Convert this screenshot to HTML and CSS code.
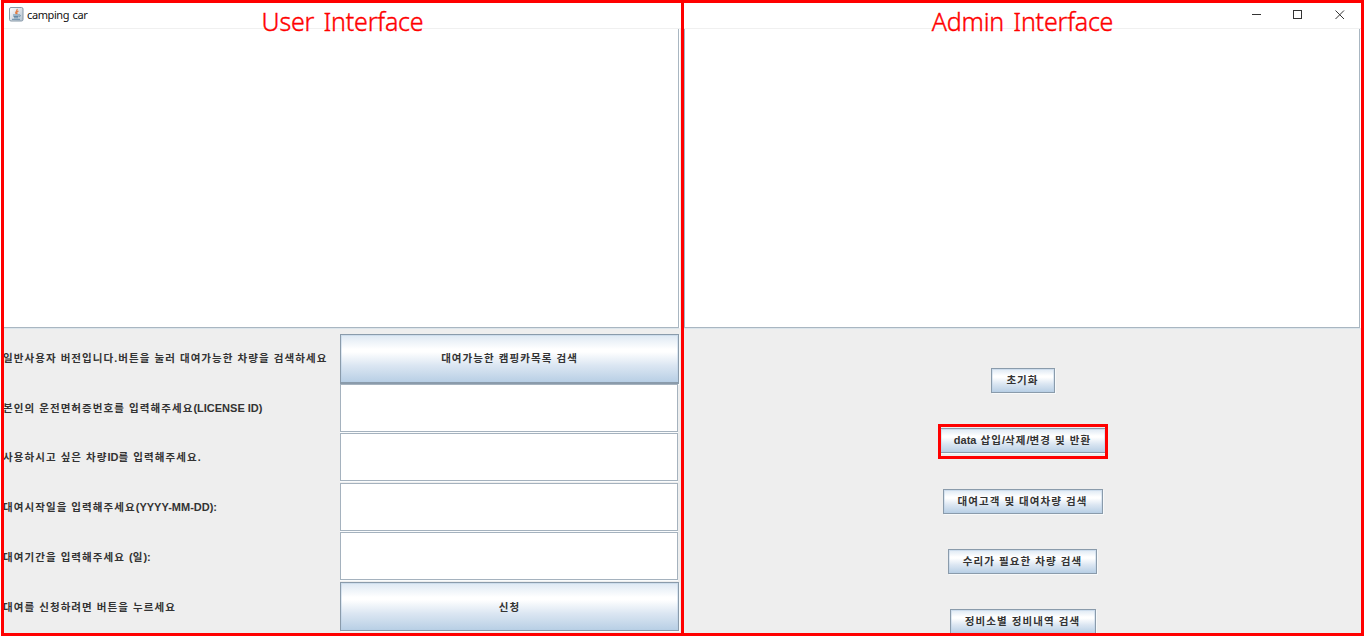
FILE: index.html
```
<!DOCTYPE html>
<html lang="ko">
<head>
<meta charset="utf-8">
<title>camping car</title>
<link rel="stylesheet" href="styles.css">
</head>
<body>
<div class="window">
  <header class="titlebar">
    <svg class="java" width="15" height="15" viewBox="0 0 15 15">
      <defs><linearGradient id="tile" x2="1" y2="1"><stop stop-color="#fff"/><stop offset="1" stop-color="#b3c2cf"/></linearGradient></defs>
      <rect x=".5" y=".5" width="13.5" height="13.5" rx="1.5" fill="url(#tile)" stroke="#8799a8"/>
      <path d="M8 2C9 4 5.500 4.500 7 7M9.500 4C7.500 5 7.500 5.500 8.200 7" fill="none" stroke="#e07a40" stroke-width="1.200"/>
      <path d="M4 8h6M4.500 9.500h5M5 10.800h4.200M10 8c2-.5 1.500 1.500 0 2M3 12.300h8" fill="none" stroke="#6389a6"/>
    </svg>
    <span class="title">camping car</span>
    <svg class="controls" width="94" height="11" viewBox="0 0 94 11" fill="none" stroke="#333">
      <path d="M0 5.500h9"/><rect x="41.500" y="1.500" width="8" height="8"/><path d="M83.500 1.500l8.500 8.500M92 1.500L83.500 10"/>
    </svg>
  </header>
  <main class="panels">
    <section class="panel user">
      <div class="output"></div>
      <div class="form">
        <label class="intro">일반사용자 버전입니다.버튼을 눌러 대여가능한 차량을 검색하세요</label>
        <button class="big first">대여가능한 캠핑카목록 검색</button>
        <label>본인의 운전면허증번호를 입력해주세요<span class="latin">(LICENSE ID)</span></label>
        <input>
        <label>사용하시고 싶은 차량<span class="latin">ID</span>를 입력해주세요.</label>
        <input>
        <label>대여시작일을 입력해주세요<span class="latin">(YYYY-MM-DD):</span></label>
        <input>
        <label>대여기간을 입력해주세요 <span class="latin">(</span>일<span class="latin">):</span></label>
        <input>
        <label>대여를 신청하려면 버튼을 누르세요</label>
        <button class="big">신청</button>
      </div>
    </section>
    <section class="panel admin">
      <div class="output"></div>
      <div class="actions">
        <button class="b1">초기화</button>
        <button class="b2"><span class="latin">data</span> 삽입<span class="latin">/</span>삭제<span class="latin">/</span>변경 및 반환</button>
        <button class="b3">대여고객 및 대여차량 검색</button>
        <button class="b4">수리가 필요한 차량 검색</button>
        <button class="b5">정비소별 정비내역 검색</button>
      </div>
    </section>
  </main>
  <div class="frame frame-user"><span class="caption">User Interface</span></div>
  <div class="frame frame-admin"><span class="caption">Admin Interface</span></div>
  <div class="highlight"></div>
</div>
</body>
</html>
```
FILE: styles.css
```
* { box-sizing: border-box; }
body { margin: 0; background: #fff; }
.window {
  position: relative;
  display: flex;
  flex-direction: column;
  width: 1364px;
  height: 637px;
  padding: 0 3px 1px;
  overflow: hidden;
  font-family: "Liberation Sans", "Noto Sans CJK KR", sans-serif;
}
.titlebar {
  display: flex;
  align-items: center;
  flex: none;
  height: 29px;
  padding: 0 15px 0 6px;
  border-bottom: 1px solid #f0f0f0;
  background: #fff;
}
.title {
  margin-left: 3px;
  font: 11px "Noto Sans", sans-serif;
  letter-spacing: -.4px;
  word-spacing: 1px;
  color: #111;
}
.controls { margin-left: auto; }
.panels {
  display: grid;
  grid-template-columns: 681px 1fr;
  flex: 1;
  min-height: 0;
  background: #eee;
}
.panel { display: flex; flex-direction: column; min-width: 0; min-height: 0; }
.output {
  flex: none;
  height: 299px;
  margin-right: 5px;
  background: #fff;
  border: solid #a9b6c1;
  border-width: 0 1px 1px 0;
  box-shadow: 0 1px #dce5eb, 1px 0 #fff;
}
.admin .output { margin-right: 1px; border-left-width: 1px; }
.form {
  display: grid;
  grid-template-columns: 337px 339px;
  grid-template-rows: 49px 49px 50px 49px 51px 49px;
  padding-top: 6px;
}
label {
  align-self: center;
  font-weight: bold;
  font-size: 10.500px;
  line-height: 16px;
  letter-spacing: 1.070px;
  white-space: nowrap;
  color: #333;
}
.intro { padding-bottom: 2px; }
.latin { font-size: 11px; letter-spacing: 0; }
input {
  width: 338px;
  height: 48px;
  margin: 1px 0 0;
  padding: 0;
  border: 1px solid #a5b2be;
  border-radius: 0;
  background: #fff;
  box-shadow: 0 1px #fafcfd;
}
button {
  padding: 0;
  border: 1px solid #8a9bab;
  box-shadow: inset 0 0 0 1px rgba(184, 207, 229, .45), 1px 1px #f7f9fa;
  background: linear-gradient(#dde8f3, #fff 30%, #fff 36%, #dbe6f2 65%, #b8cfe5);
  color: #333;
  font: bold 10.500px/14px "Liberation Sans", "Noto Sans CJK KR", sans-serif;
  letter-spacing: 1.070px;
  white-space: nowrap;
}
.big { width: 339px; height: 49px; }
.first { height: 50px; padding-bottom: 1px; border-bottom-width: 2px; }
.actions {
  display: flex;
  flex-direction: column;
  align-items: center;
  gap: 35.300px;
  height: 308px;
  padding-top: 40px;
  overflow: hidden;
}
.actions button { flex: none; height: 25px; padding-bottom: 1px; }
.b1 { width: 64px; }
.b2 { width: 166px; }
.b3 { width: 160px; }
.b4 { width: 149px; }
.b5 { width: 146px; }
.frame {
  position: absolute;
  top: 0;
  height: 636px;
  border: 3px solid #f00;
  text-align: center;
  color: #f00;
  font: 25px/36px "Noto Sans", sans-serif;
}
.frame-user { left: 1px; width: 683px; }
.frame-admin { left: 681px; width: 683px; }
.caption {
  display: inline-block;
  white-space: nowrap;
  font-weight: 300;
  letter-spacing: -.2px;
  word-spacing: 3px;
  -webkit-text-stroke: .4px #f00;
}
.highlight {
  position: absolute;
  left: 938px;
  top: 424px;
  width: 170px;
  height: 35px;
  border: 3px solid #f00;
}
```
